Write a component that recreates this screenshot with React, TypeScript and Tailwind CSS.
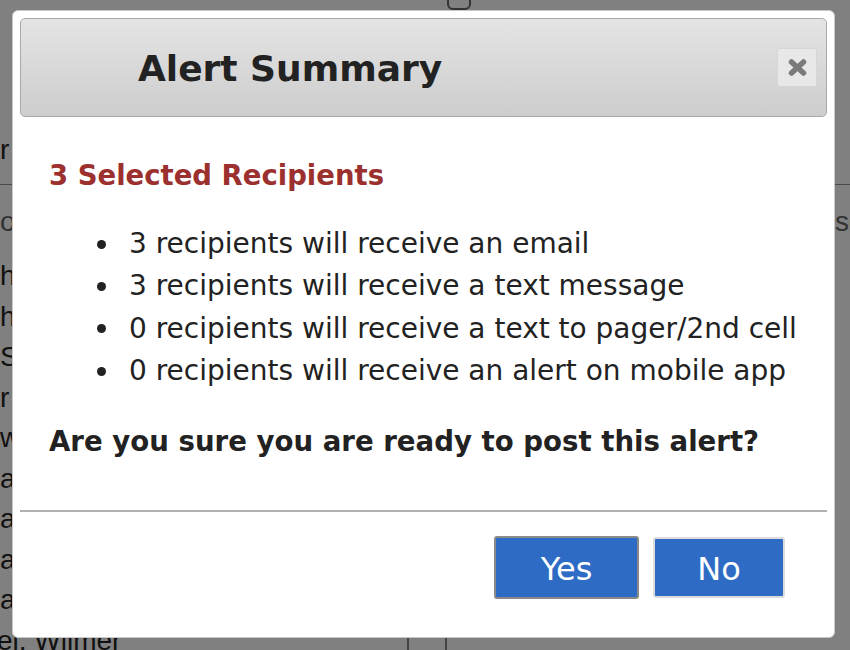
import React from "react";

const leftRows = ["h", "h", "S", "r", "w", "ac", "a", "a", "a"];

function CloseIcon() {
  return (
    <svg width="21" height="19" viewBox="0 0 21 19" aria-hidden="true">
      <path d="M4.5 4 L16.5 15 M16.5 4 L4.5 15" stroke="#7a7a7a" strokeWidth="5.5" strokeLinecap="round" />
    </svg>
  );
}

export default function App() {
  const items = [
    "3 recipients will receive an email",
    "3 recipients will receive a text message",
    "0 recipients will receive a text to pager/2nd cell",
    "0 recipients will receive an alert on mobile app",
  ];
  return (
    <div className="relative h-[650px] w-[850px] overflow-hidden bg-[#808080] font-['Liberation_Sans',Arial,sans-serif] text-[28px] text-[#111]">
      {/* background page (dimmed) */}
      <div className="flex h-[10px] pl-[447px]">
        <div className="-mt-[12px] h-[22px] w-[24px] rounded-[6px] border-2 border-[#333]" />
      </div>
      <div className="h-[120px]" />
      <div className="h-[40px] whitespace-nowrap leading-[40px]">r</div>
      <div className="h-[14px]" />
      <div className="h-px bg-[#4a4a4a]" />
      <div className="h-[17px]" />
      <div className="flex h-[40px] items-center justify-between leading-[40px] text-[#333]">
        <span className="whitespace-nowrap">o</span>
        <span className="w-[15px] overflow-hidden whitespace-nowrap">se</span>
      </div>
      <div className="h-[14px]" />
      {leftRows.map((t, i) => (
        <div key={i} className="h-[40.5px] whitespace-nowrap leading-[40.5px]">
          {t}
        </div>
      ))}
      <div className="flex h-[40.5px] leading-[40.5px]">
        <div className="-ml-[3px] w-[410px] whitespace-nowrap">el, Wilmer</div>
        <div className="w-[38px] border-l-2 border-[#444]" />
        <div className="flex-1 border-l-2 border-[#444]" />
      </div>

      {/* dialog */}
      <div className="absolute left-[12px] top-[10px] flex h-[628px] w-[823px] flex-col rounded-[6px] border border-[#c8c8c8] bg-white p-[7px] font-['DejaVu_Sans',Verdana,sans-serif] text-[#222]">
        <div className="flex h-[99px] items-center rounded-[5px] border border-[#a9a9a9] bg-gradient-to-b from-[#e4e4e4] to-[#cdcdcd] pl-[117px] pr-[9px]">
          <h1 className="pt-[2px] text-[36px] font-bold leading-none text-[#222]">Alert Summary</h1>
          <button className="ml-auto flex h-[39px] w-[40px] items-center justify-center rounded-[3px] border border-[#d6d6d6] bg-[#e8e8e8]">
            <CloseIcon />
          </button>
        </div>

        <div className="pl-[29px]">
          <h2 className="mt-[41px] text-[27.5px] font-bold leading-[34px] text-[#9b302e]">3 Selected Recipients</h2>
          <ul className="mt-[31px] pl-[48px]">
            {items.map((t) => (
              <li key={t} className="flex h-[42.3px] items-center text-[28px] leading-[42px]">
                <span className="mr-[23px] h-[9px] w-[9px] shrink-0 rounded-full bg-[#222]" />
                <span className="whitespace-nowrap">{t}</span>
              </li>
            ))}
          </ul>
          <p className="mt-[29px] text-[27.6px] font-bold leading-[42px]">Are you sure you are ready to post this alert?</p>
        </div>

        <div className="mt-[47px] h-[2px] bg-[#b0b0b0]" />

        <div className="mt-[24px] flex justify-end gap-[14px] pr-[42px]">
          <button className="flex h-[63px] w-[145px] items-center justify-center rounded-[3px] border-2 border-[#8a8a8a] bg-[#2e6bc4] pt-[3px] text-[32px] text-white">
            Yes
          </button>
          <button className="mt-[1px] flex h-[61px] w-[132px] items-center justify-center rounded-[3px] border-2 border-[#dcdcdc] bg-[#2e6bc4] pt-[3px] text-[32px] text-white">
            No
          </button>
        </div>
      </div>
    </div>
  );
}
